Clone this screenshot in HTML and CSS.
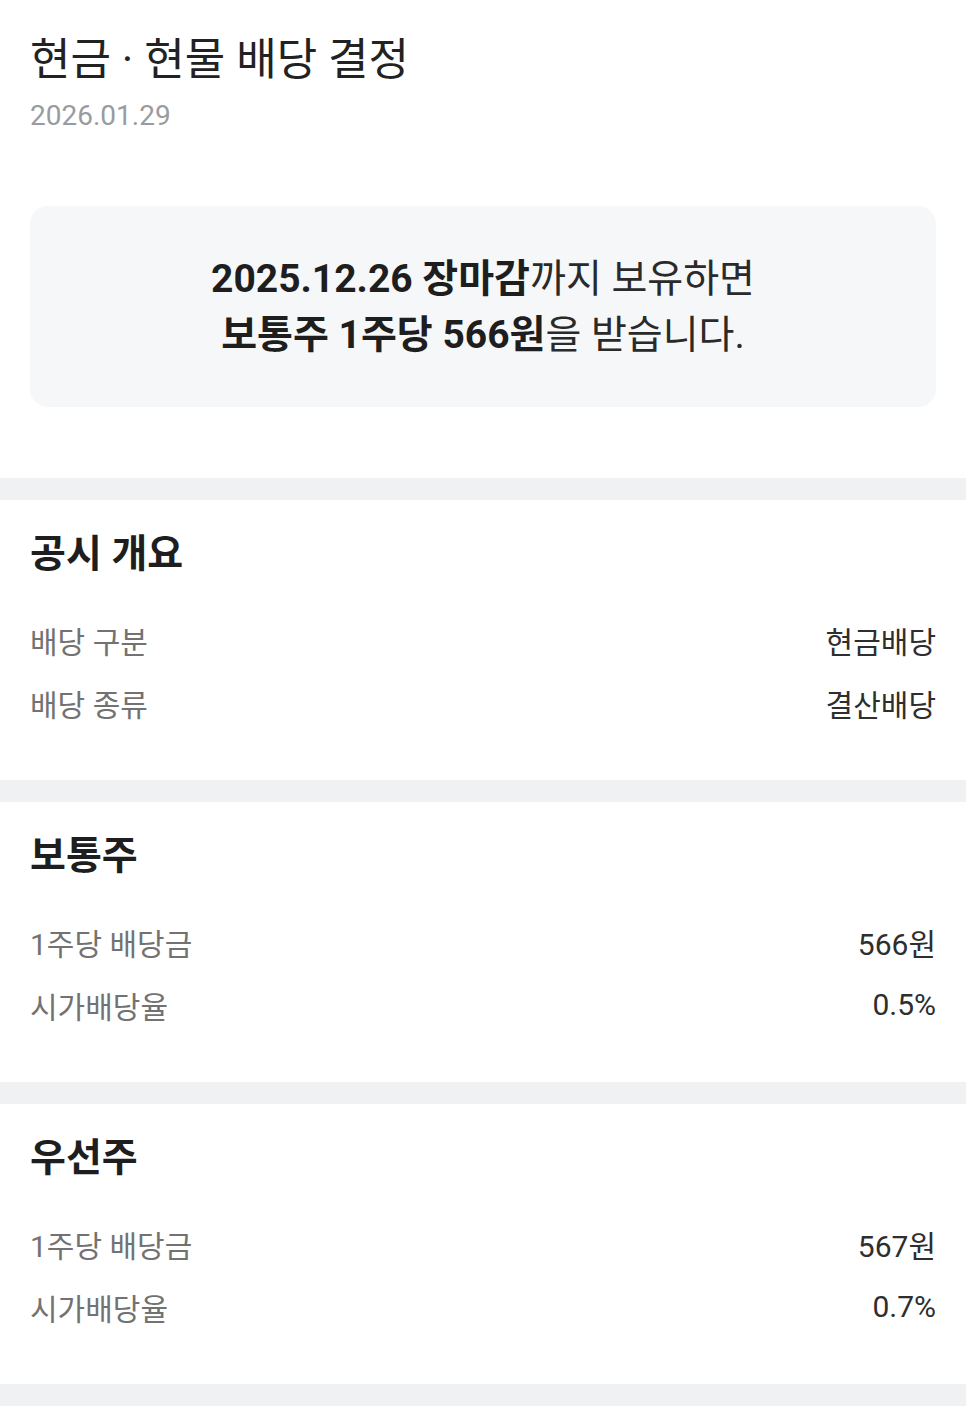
FILE: index.html
```html
<!DOCTYPE html>
<html lang="ko">
<head>
<meta charset="utf-8">
<link rel="stylesheet" href="styles.css">
</head>
<body>
<div class="page">
  <header class="top">
    <h1 class="title">현금 · 현물 배당 결정</h1>
    <div class="date">2026.01.29</div>
    <div class="card">
      <p class="card-line"><b>2025.12.26 장마감</b>까지 보유하면</p>
      <p class="card-line"><b>보통주 1주당 566원</b>을 받습니다.</p>
    </div>
  </header>
  <div class="band"></div>
  <section class="sec">
    <h2 class="sec-title">공시 개요</h2>
    <div class="row"><span class="label">배당 구분</span><span class="value">현금배당</span></div>
    <div class="row"><span class="label">배당 종류</span><span class="value">결산배당</span></div>
  </section>
  <div class="band"></div>
  <section class="sec">
    <h2 class="sec-title">보통주</h2>
    <div class="row"><span class="label">1주당 배당금</span><span class="value">566원</span></div>
    <div class="row"><span class="label">시가배당율</span><span class="value">0.5%</span></div>
  </section>
  <div class="band"></div>
  <section class="sec">
    <h2 class="sec-title">우선주</h2>
    <div class="row"><span class="label">1주당 배당금</span><span class="value">567원</span></div>
    <div class="row"><span class="label">시가배당율</span><span class="value">0.7%</span></div>
  </section>
  <div class="band"></div>
</div>
</body>
</html>
```
FILE: styles.css
```css
* { box-sizing: border-box; }
html, body { margin: 0; padding: 0; background: #fff; }
body {
  font-family: Roboto, "Noto Sans CJK KR", sans-serif;
  color: #222;
}
.page { width: 966px; }
.top { padding: 32px 30px 71px; }
.title {
  margin: 0;
  font-size: 44px;
  line-height: 56px;
  font-weight: 400;
  color: #222;
}
.date {
  margin-top: 10px;
  font-size: 28px;
  line-height: 36px;
  color: #9a9b9e;
}
.card {
  margin-top: 72px;
  height: 201px;
  background: #f6f7f9;
  border-radius: 18px;
  display: flex;
  flex-direction: column;
  justify-content: center;
  align-items: center;
}
.card-line {
  margin: 0;
  font-size: 39px;
  line-height: 56px;
  color: #2a2a2a;
}
.card-line b { font-weight: 700; color: #1e1e1e; }
.band { height: 22px; background: #f0f1f3; }
.sec { padding: 32px 30px 46px; }
.sec-title {
  margin: 0 0 32px;
  font-size: 39px;
  line-height: 44px;
  font-weight: 700;
  color: #1e1e1e;
}
.row {
  height: 63px;
  display: flex;
  justify-content: space-between;
  align-items: center;
  font-size: 30px;
}
.label { color: #727272; }
.value { color: #2e2e2e; }
```
